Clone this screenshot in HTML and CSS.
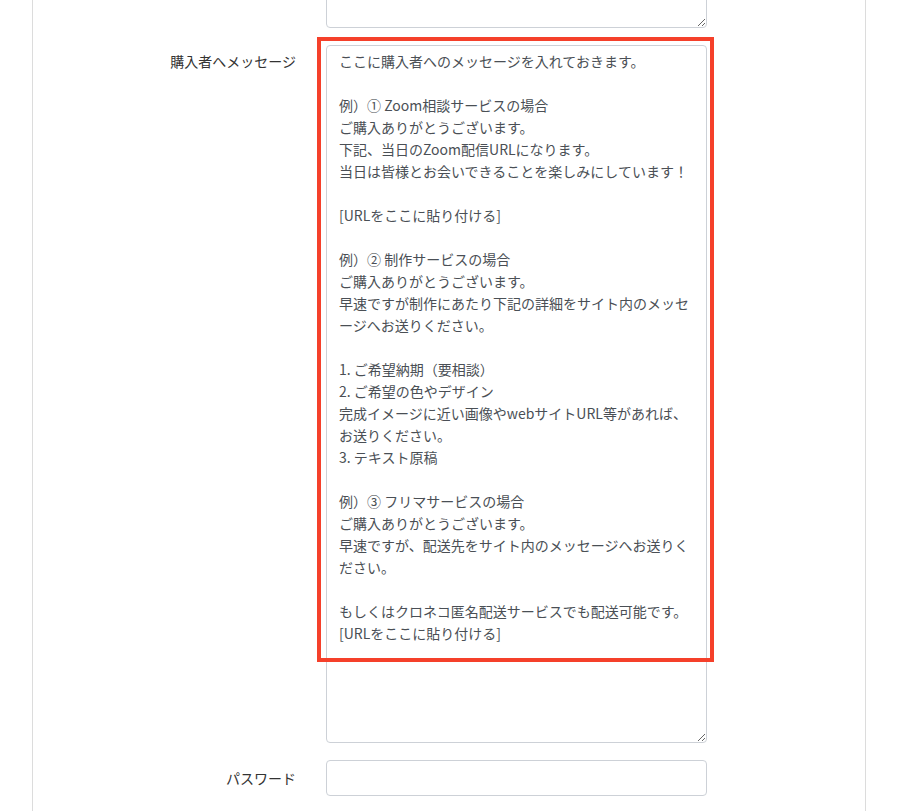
FILE: index.html
```html
<!DOCTYPE html>
<html lang="ja">
<head>
    <meta charset="UTF-8">
    <meta name="viewport" content="width=device-width, initial-scale=1">
    <title>商品登録</title>
    <link rel="stylesheet" href="styles.css">
</head>
<body>
<!-- フォームカード -->
<div class="card">
    <div class="form-row">
        <label class="form-label"></label>
        <div class="form-field">
            <textarea class="form-control form-control-sm"></textarea>
        </div>
    </div>

    <div class="form-row">
        <label class="form-label" for="message">購入者へメッセージ</label>
        <div class="form-field highlight-wrap">
            <textarea id="message" class="form-control form-control-lg">ここに購入者へのメッセージを入れておきます。

例）① Zoom相談サービスの場合
ご購入ありがとうございます。
下記、当日のZoom配信URLになります。
当日は皆様とお会いできることを楽しみにしています！

[URLをここに貼り付ける]

例）② 制作サービスの場合
ご購入ありがとうございます。
早速ですが制作にあたり下記の詳細をサイト内のメッセージへお送りください。

1. ご希望納期（要相談）
2. ご希望の色やデザイン
完成イメージに近い画像やwebサイトURL等があれば、お送りください。
3. テキスト原稿

例）③ フリマサービスの場合
ご購入ありがとうございます。
早速ですが、配送先をサイト内のメッセージへお送りください。

もしくはクロネコ匿名配送サービスでも配送可能です。
[URLをここに貼り付ける]</textarea>
            <!-- 注目枠 -->
            <div class="highlight"></div>
        </div>
    </div>

    <div class="form-row form-row-center">
        <label class="form-label" for="password">パスワード</label>
        <div class="form-field">
            <input id="password" type="password" class="form-control">
        </div>
    </div>
</div>
</body>
</html>
```

FILE: styles.css
```css
/* 全体 */
* { box-sizing: border-box; margin: 0; padding: 0; }
body {
    font-family: "Noto Sans CJK JP", "Noto Sans", sans-serif;
    background: #fff;
    color: #333;
    font-size: 14px;
}

/* カード */
.card {
    margin-left: 32px;
    margin-top: -72px;
    width: 834px;
    min-height: 900px;
    border-left: 1px solid #dcdcdc;
    border-right: 1px solid #dcdcdc;
    background: #fff;
}

/* フォーム行 */
.form-row {
    display: grid;
    grid-template-columns: 263px 381px;
    column-gap: 30px;
    margin-bottom: 17px;
}
.form-row-center { align-items: center; }
.form-label {
    text-align: right;
    line-height: 22px;
    padding-top: 5px;
    color: #333;
}
.form-row-center .form-label { padding-top: 0; }
.form-field { position: relative; }

.form-control {
    display: block;
    width: 100%;
    font-family: "Noto Sans CJK JP", "Noto Sans", sans-serif;
    font-size: 14px;
    line-height: 22px;
    color: #4a4f55;
    background: #fff;
    border: 1px solid #cdd1d7;
    border-radius: 4px;
    padding: 4px 12px;
    outline: none;
}
.form-control-sm { height: 100px; }
.form-control-lg { height: 698px; }
input.form-control { height: 36px; }

/* 赤枠 */
.highlight {
    position: absolute;
    left: -9px;
    top: -8px;
    width: 397px;
    height: 625px;
    border: 4px solid #f5402a;
    pointer-events: none;
}
```
